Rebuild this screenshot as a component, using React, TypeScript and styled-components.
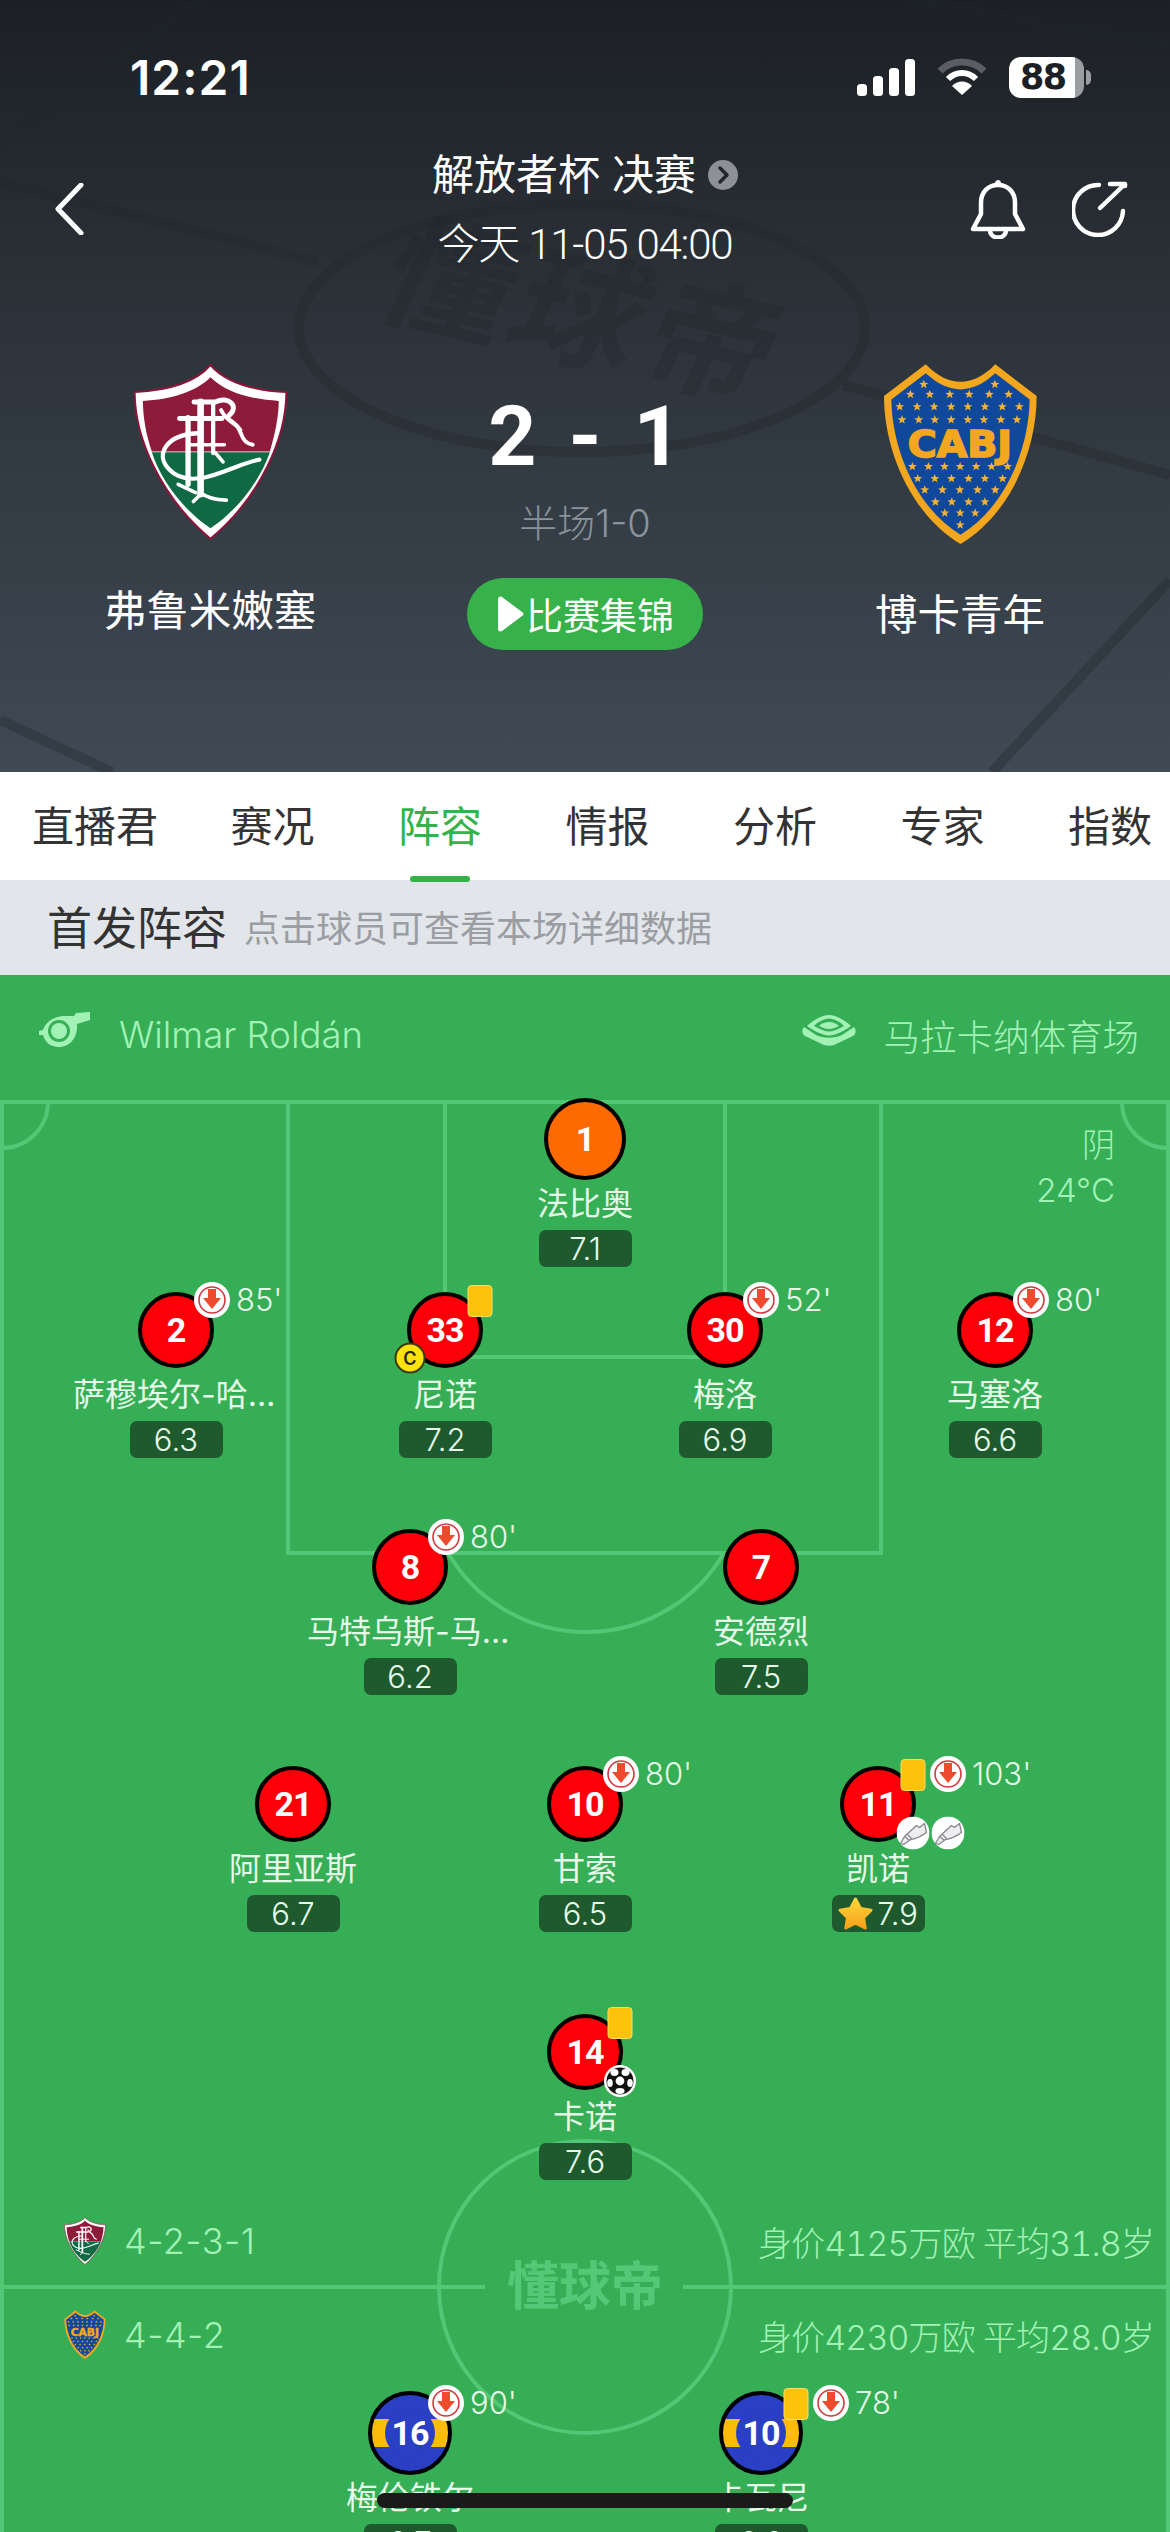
import React from "react";
import styled, { createGlobalStyle, css } from "styled-components";

const FONT = `"Inter","Noto Sans CJK SC",sans-serif`;

const Global = createGlobalStyle`
  html, body { margin: 0; padding: 0; background: #36ae55; }
  * { box-sizing: border-box; }
  body { font-family: ${FONT}; }
`;

const Page = styled.div`
  width: 1170px;
  height: 2532px;
  overflow: hidden;
  display: flex;
  flex-direction: column;
  position: relative;
`;

/* ---------- header ---------- */
const Header = styled.header`
  position: relative;
  height: 772px;
  flex: none;
  overflow: hidden;
  color: #fff;
  background: linear-gradient(180deg, #1c2025 0%, #2a3036 35%, #3f4a55 100%);
`;
const HeaderArt = styled.svg`
  position: absolute;
  inset: 0;
`;
const HeaderMark = styled.span`
  position: absolute;
  left: 345px;
  top: 228px;
  width: 480px;
  text-align: center;
  font-size: 128px;
  line-height: 170px;
  font-weight: 700;
  letter-spacing: 6px;
  color: rgba(24, 28, 33, 0.2);
  transform: rotate(13deg) skewX(-12deg);
`;
const StatusBar = styled.div`
  position: relative;
  height: 138px;
  padding: 16px 79px 0 130px;
  display: flex;
  align-items: center;
  justify-content: space-between;
`;
const Clock = styled.span`
  font-size: 48px;
  font-weight: 600;
  letter-spacing: 1px;
`;
const StatusIcons = styled.div`
  display: flex;
  align-items: center;
  gap: 22px;
`;
const Battery = styled.div`
  position: relative;
  width: 75px;
  height: 41px;
  border-radius: 12px;
  background: linear-gradient(90deg, #fff 88%, #9b9ea1 88%);
  color: #1c2025;
  font-size: 35px;
  font-weight: 700;
  line-height: 41px;
  padding-left: 11px;
  margin-right: 7px;
  font-family: "DejaVu Sans", sans-serif;
  letter-spacing: -1.5px;
  &::after {
    content: "";
    position: absolute;
    right: -7px;
    top: 13px;
    width: 5px;
    height: 15px;
    border-radius: 0 5px 5px 0;
    background: #9b9ea1;
  }
`;
const Nav = styled.div`
  position: relative;
  height: 140px;
  display: grid;
  grid-template-columns: 1fr auto 1fr;
  align-items: center;
`;
const BackBtn = styled.div`
  padding-left: 54px;
  display: flex;
  align-items: center;
`;
const Match = styled.div`
  display: flex;
  flex-direction: column;
  align-items: center;
  font-size: 42px;
  line-height: 70px;
`;
const MatchTitle = styled.div`
  display: flex;
  align-items: center;
  gap: 12px;
  padding-top: 2px;
`;
const MatchDate = styled.span`
  font-family: Roboto, "Noto Sans CJK SC", sans-serif;
  font-weight: 300;
  letter-spacing: -1.2px;
`;
const NavActions = styled.div`
  display: flex;
  justify-content: flex-end;
  align-items: center;
  gap: 46px;
  padding-right: 42px;
`;
const Teams = styled.div`
  position: relative;
  display: grid;
  grid-template-columns: 420px 330px 420px;
  padding-top: 85px;
`;
const Team = styled.div`
  display: flex;
  flex-direction: column;
  align-items: center;
`;
const TeamName = styled.div`
  margin-top: 40px;
  font-size: 42.5px;
  line-height: 60px;
`;
const ScoreCol = styled.div`
  display: flex;
  flex-direction: column;
  align-items: center;
  padding-top: 23px;
`;
const Score = styled.div`
  height: 100px;
  display: flex;
  align-items: center;
  gap: 32px;
  font-family: Roboto, sans-serif;
  font-size: 84px;
  font-weight: 700;
`;
const Half = styled.div`
  margin-top: 12px;
  font-size: 38px;
  line-height: 50px;
  font-weight: 300;
  color: #8b9299;
`;
const HighlightBtn = styled.div`
  margin-top: 30px;
  width: 236px;
  height: 72px;
  border-radius: 36px;
  background: #37b24a;
  display: flex;
  align-items: center;
  justify-content: center;
  gap: 2px;
  font-size: 37px;
  color: #fff;
`;

/* ---------- tabs ---------- */
const TabBar = styled.nav`
  height: 108px;
  flex: none;
  background: #fff;
  display: flex;
  align-items: center;
  padding: 2px 0 0 32px;
  gap: 83.5px;
  position: relative;
  z-index: 1;
`;
const Tab = styled.div<{ $active?: boolean; $first?: boolean }>`
  position: relative;
  font-size: 42px;
  line-height: 60px;
  color: ${(p) => (p.$active ? "#37b24a" : "#333")};
  ${(p) => p.$first && css`margin-right: -11px;`}
  ${(p) =>
    p.$active &&
    css`
      &::after {
        content: "";
        position: absolute;
        left: 50%;
        bottom: -25px;
        width: 60px;
        height: 6px;
        margin-left: -30px;
        border-radius: 3px;
        background: #37b24a;
      }
    `}
`;
const SubHeader = styled.div`
  height: 95px;
  flex: none;
  background: #e2e5e9;
  display: flex;
  align-items: center;
  padding: 0 0 4px 47px;
  gap: 17px;
`;
const SubTitle = styled.div`
  font-size: 45px;
  color: #333;
`;
const SubHint = styled.div`
  font-size: 36px;
  color: #9a9da2;
`;

/* ---------- pitch ---------- */
const Pitch = styled.section`
  position: relative;
  flex: 1;
  background: #36ae55;
  overflow: hidden;
`;
const PitchLines = styled.svg`
  position: absolute;
  inset: 0;
`;
const InfoRow = styled.div`
  position: relative;
  height: 120px;
  display: flex;
  align-items: center;
  justify-content: space-between;
  padding: 0 31px 0 37px;
  color: #a2f2b6;
  font-size: 36.5px;
  font-weight: 300;
`;
const InfoItem = styled.div`
  display: flex;
  align-items: center;
  gap: 28px;
  svg {
    margin-bottom: 11px;
  }
`;
const Weather = styled.div`
  position: absolute;
  right: 55px;
  top: 148px;
  text-align: right;
  color: #a2f2b6;
  font-size: 33px;
  line-height: 45px;
  font-weight: 300;
`;
const FieldMark = styled.div`
  position: absolute;
  left: 485px;
  width: 200px;
  top: 1272px;
  text-align: center;
  font-size: 52px;
  line-height: 80px;
  font-weight: 700;
  color: #55c878;
`;
const Formation = styled.div<{ $top: number }>`
  position: absolute;
  left: 64px;
  right: 20px;
  top: ${(p) => p.$top}px;
  height: 60px;
  display: flex;
  align-items: center;
  color: #a2f2b6;
  font-size: 36px;
  font-weight: 300;
`;
const FormationShape = styled.span`
  margin-left: 18px;
  letter-spacing: 0.5px;
`;
const FormationStats = styled.span`
  position: absolute;
  left: 694px;
  font-size: 34px;
  font-variant-numeric: tabular-nums;
  letter-spacing: -0.9px;
  white-space: pre;
`;

/* ---------- player ---------- */
const PlayerNode = styled.div<{ $x: number; $y: number }>`
  position: absolute;
  left: ${(p) => p.$x - 103}px;
  top: ${(p) => p.$y - 42 - 975}px;
  width: 206px;
  display: flex;
  flex-direction: column;
  align-items: center;
`;
const ShirtSlot = styled.div`
  height: 84px;
  display: flex;
  align-items: center;
  justify-content: center;
`;
const kits = {
  gk: css`
    width: 82px;
    height: 82px;
    background: #ff6a00;
  `,
  home: css`
    width: 76px;
    height: 76px;
    background: #fb0008;
  `,
  away: css`
    width: 84px;
    height: 84px;
    background: linear-gradient(180deg, #2a3fc4 0 32%, #fdbb0b 32% 68%, #2a3fc4 68% 100%);
    &::before {
      content: "";
      position: absolute;
      left: 50%;
      top: 50%;
      width: 50px;
      height: 50px;
      margin: -25px 0 0 -25px;
      border-radius: 50%;
      background: #2a3fc4;
    }
  `,
};
const Shirt = styled.div<{ $kit: keyof typeof kits }>`
  position: relative;
  border-radius: 50%;
  border: 4.5px solid #000;
  ${(p) => kits[p.$kit]}
  color: #fff;
  display: flex;
  align-items: center;
  justify-content: center;
`;
const ShirtNumber = styled.span`
  position: relative;
  font-family: Roboto, sans-serif;
  font-size: 34px;
  font-weight: 700;
  letter-spacing: -1px;
`;
const Badge = styled.span<{ $dx: number; $dy: number }>`
  position: absolute;
  left: 50%;
  top: 50%;
  display: flex;
  transform: translate(calc(-50% + ${(p) => p.$dx}px), calc(-50% + ${(p) => p.$dy}px));
`;
const CardBadge = styled(Badge)`
  width: 25px;
  height: 32px;
  border-radius: 4px;
  background: #fdc20a;
  border: 1px solid #f7dc6a;
`;
const CaptainBadge = styled(Badge)`
  width: 31px;
  height: 31px;
  border-radius: 50%;
  background: #ffe20a;
  border: 2px solid #3b3b10;
  color: #222;
  font-size: 18px;
  font-weight: 600;
  align-items: center;
  justify-content: center;
`;
const Minute = styled.span<{ $left: number }>`
  position: absolute;
  left: calc(50% + ${(p) => p.$left}px);
  top: calc(50% - 50px);
  font-size: 31px;
  line-height: 40px;
  font-weight: 300;
  color: #e4f9e7;
  white-space: nowrap;
`;
const PlayerName = styled.div`
  margin-top: 1px;
  width: 206px;
  text-align: center;
  font-size: 32px;
  line-height: 44px;
  color: #e6fae9;
  white-space: nowrap;
  overflow: hidden;
  text-overflow: ellipsis;
`;
const Rating = styled.div`
  margin-top: 4px;
  width: 93px;
  height: 37px;
  border-radius: 7px;
  background: #1f5a2e;
  color: #e6fae9;
  font-size: 31px;
  font-weight: 300;
  line-height: 37px;
  display: flex;
  align-items: center;
  justify-content: center;
  gap: 4px;
`;
const HomeBar = styled.div`
  position: absolute;
  left: 377px;
  top: 2493px;
  width: 416px;
  height: 15px;
  border-radius: 8px;
  background: #1a1a1a;
`;

/* ---------- drawings ---------- */
const Signal = () => (
  <svg width="58" height="37" viewBox="0 0 58 37">
    <g fill="#fff">
      <rect x="0" y="25" width="10" height="12" rx="3.5" />
      <rect x="16" y="17" width="10" height="20" rx="3.5" />
      <rect x="32" y="9" width="10" height="28" rx="3.5" />
      <rect x="48" y="0" width="10" height="37" rx="3.5" />
    </g>
  </svg>
);
const Wifi = () => (
  <svg width="50" height="38" viewBox="0 0 50 38" fill="none">
    <path d="M3 13 C15 1 35 1 47 13" stroke="#5a5d61" strokeWidth="7" />
    <path d="M11 21 C19 13 31 13 39 21" stroke="#fff" strokeWidth="6" />
    <path d="M25 37 L15 28 C20 22 30 22 35 28 Z" fill="#fff" />
  </svg>
);
const Back = () => (
  <svg width="30" height="52" viewBox="0 0 30 52" fill="none">
    <path d="M27 2 L4 26 L27 50" stroke="#fff" strokeWidth="5" strokeLinecap="round" strokeLinejoin="round" />
  </svg>
);
const RoundChevron = () => (
  <svg width="30" height="30" viewBox="0 0 30 30" fill="none">
    <circle cx="15" cy="15" r="15" fill="#8d9094" />
    <path d="M12 8 L19 15 L12 22" stroke="#22262b" strokeWidth="3.5" strokeLinecap="round" strokeLinejoin="round" />
  </svg>
);
const Bell = () => (
  <svg width="56" height="60" viewBox="0 0 56 60" fill="none" stroke="#fff" strokeWidth="4.5" strokeLinejoin="round">
    <path d="M3 50 L11 35 V24 C11 13 18 6 28 6 C38 6 45 13 45 24 V35 L53 50 Z" />
    <path d="M20 51 C20 61 36 61 36 51" />
    <circle cx="28" cy="4" r="2.5" fill="#fff" strokeWidth="1" />
  </svg>
);
const Share = () => (
  <svg width="56" height="56" viewBox="0 0 56 56" fill="none" stroke="#fff" strokeWidth="4.5" strokeLinecap="round">
    <path d="M27 4 A25 25 0 1 0 51 30" />
    <path d="M28 27 L52 4" />
    <path d="M38 3 H53 V5" strokeLinejoin="round" />
  </svg>
);
const PlayTri = () => (
  <svg width="28" height="36" viewBox="0 0 28 36">
    <path d="M2 3 C2 1 4 0 6 1 L26 16 C28 17 28 19 26 20 L6 35 C4 36 2 35 2 33 Z" fill="#fff" />
  </svg>
);

const Fluminense = ({ width }: { width: number }) => (
  <svg width={width} viewBox="95 72 470 540" style={{ display: "block" }}>
    <path d="M330 78 C285 130 200 155 100 160 C100 300 180 480 330 605 C480 480 560 300 560 160 C460 155 375 130 330 78Z" fill="#fff" stroke="#8a1538" strokeWidth="6" />
    <path d="M330 115 C285 160 210 182 125 187 C125 235 135 290 152 340 L510 340 C525 290 537 235 537 187 C450 182 375 160 330 115Z" fill="#8e1b3a" />
    <path d="M152 343 L510 343 C480 430 410 520 330 573 C250 520 180 430 152 343Z" fill="#0f6a43" />
    <g fill="none" stroke="#fff" strokeLinecap="round" strokeLinejoin="round">
      <path d="M280 190 H345 C385 170 420 205 385 232" strokeWidth="15" />
      <path d="M300 190 V470" strokeWidth="20" />
      <path d="M262 238 V440" strokeWidth="16" />
      <path d="M236 240 H365" strokeWidth="15" />
      <path d="M338 195 V345" strokeWidth="13" />
      <path d="M362 215 C385 260 408 245 422 285 C430 310 445 318 458 320" strokeWidth="12" />
      <path d="M385 240 C400 250 415 262 422 275" strokeWidth="9" />
      <path d="M290 285 C195 290 160 350 205 395 C240 432 300 428 360 405 C410 388 440 372 478 365" strokeWidth="13" />
      <path d="M262 320 H372 M345 345 L368 372" strokeWidth="11" />
      <path d="M232 440 L285 465 M300 470 L278 492 M300 465 C320 482 345 487 378 488" strokeWidth="11" />
    </g>
  </svg>
);

const starRows: [number, number[]][] = [
  [130, [222, 435]],
  [160, [182, 240, 300, 358, 418, 476]],
  [197, [150, 202, 253, 304, 354, 405, 457, 508]],
  [236, [157, 207, 255, 304, 354, 402, 453, 501]],
  [376, [188, 236, 284, 331, 379, 425, 473]],
  [412, [204, 255, 305, 356, 405, 458]],
  [446, [225, 278, 330, 383, 436]],
  [482, [257, 306, 356, 405]],
  [515, [285, 331, 376]],
  [551, [331]],
];
const starPoints = (cx: number, cy: number, r: number) =>
  Array.from({ length: 10 }, (_, i) => {
    const a = -Math.PI / 2 + (i * Math.PI) / 5;
    const rr = i % 2 ? r * 0.42 : r;
    return `${(cx + rr * Math.cos(a)).toFixed(1)},${(cy + rr * Math.sin(a)).toFixed(1)}`;
  }).join(" ");

const Boca = ({ width }: { width: number }) => (
  <svg width={width} viewBox="100 66 464 546" style={{ display: "block" }}>
    <path d="M228 70 C265 108 298 122 332 122 C366 122 400 108 436 70 L560 165 C560 330 480 520 332 608 C185 520 103 330 103 165Z" fill="#f3a71f" />
    <path d="M228 97 C265 130 298 145 332 145 C366 145 400 130 436 97 L539 175 C537 325 465 500 332 580 C200 500 127 325 125 175Z" fill="#10499c" />
    {starRows.flatMap(([y, xs]) =>
      xs.map((x) => <polygon key={`${x}-${y}`} points={starPoints(x, y, 14)} fill="#f3b233" />)
    )}
    <text
      x="330"
      y="348"
      textAnchor="middle"
      textLength="312"
      lengthAdjust="spacingAndGlyphs"
      fontFamily='"DejaVu Sans", sans-serif'
      fontWeight="700"
      fontSize="112"
      fill="#f3a71f"
      stroke="#f3a71f"
      strokeWidth="5"
    >
      CABJ
    </text>
  </svg>
);

const Whistle = () => (
  <svg width="54" height="36" viewBox="0 0 54 36" fill="#a2f2b6">
    <path d="M2 19 L6 18 C9 9 17 5 26 4 L37 4 L39 1 L53 0 L53 8 L40 12 C41 24 34 35 22 35 C13 35 8 30 6 23 L2 23Z" />
    <circle cx="22" cy="19" r="11" fill="#36ae55" />
    <circle cx="22" cy="19" r="8" />
  </svg>
);
const Stadium = () => (
  <svg width="54" height="32" viewBox="0 0 54 32" fill="#a2f2b6">
    <path d="M2 13 L14 21 C22 24.5 32 24.5 40 21 L52 13 C54.5 16 54 20 51 22 L32 31 C29 32 25 32 22 31 L3 22 C0 20 -.5 16 2 13Z" />
    <path d="M27 1 C34 1 44 7 49 12 C40 18 33 21.5 27 21.5 C21 21.5 14 18 5 12 C10 7 20 1 27 1Z" />
    <path d="M27 4.5 C32 4.5 39 8.5 42 12 C36 15.5 31 17.5 27 17.5 C23 17.5 18 15.5 12 12 C15 8.5 22 4.5 27 4.5Z" fill="#36ae55" />
    <path d="M27 8 C31 8 35 10 37 12 C33 14 30 15 27 15 C24 15 21 14 17 12 C19 10 23 8 27 8Z" />
  </svg>
);
const SubIcon = () => (
  <svg width="36" height="36" viewBox="0 0 36 36">
    <circle cx="18" cy="18" r="18" fill="#fff" />
    <circle cx="18" cy="18" r="13" fill="none" stroke="#cf3a3f" strokeWidth="1.6" />
    <path d="M14 7 H22 V16 H27 L18 27 L9 16 H14Z" fill="#ee4a2e" />
  </svg>
);
const BootIcon = () => (
  <svg width="33" height="33" viewBox="0 0 33 33">
    <circle cx="16.5" cy="16.5" r="16.5" fill="#fff" />
    <path d="M4 27 L8 20 L20 9 L23 11 L28 7 L30 16 C26 19 20 22 14 23 L7 28Z" fill="#eeeef1" stroke="#85858b" strokeWidth="1.3" strokeLinejoin="round" />
    <path d="M8 20 L13 24 M11 18 L15 22" stroke="#85858b" strokeWidth="1.2" />
  </svg>
);
const BallIcon = () => (
  <svg width="32" height="32" viewBox="0 0 32 32">
    <circle cx="16" cy="16" r="16" fill="#fff" />
    <circle cx="16" cy="16" r="13.5" fill="#111" />
    <g fill="#fff">
      <circle cx="16" cy="16" r="4.4" />
      <ellipse cx="10.5" cy="7.5" rx="4" ry="3.4" />
      <ellipse cx="21.5" cy="7.5" rx="4" ry="3.4" />
      <ellipse cx="6" cy="18" rx="2.8" ry="4" />
      <ellipse cx="26" cy="18" rx="2.8" ry="4" />
      <ellipse cx="16" cy="26" rx="4.6" ry="3" />
    </g>
  </svg>
);
const StarIcon = () => (
  <svg width="35" height="33" viewBox="0 0 35 33">
    <defs>
      <linearGradient id="gold" x1="0" y1="0" x2="0" y2="1">
        <stop offset="0" stopColor="#ffd53a" />
        <stop offset="1" stopColor="#f7a21b" />
      </linearGradient>
    </defs>
    <path
      d="M17.5 2 L22.5 11.5 L33 13.2 L25.5 20.8 L27.2 31 L17.5 26.2 L7.8 31 L9.5 20.8 L2 13.2 L12.5 11.5Z"
      fill="url(#gold)"
      stroke="url(#gold)"
      strokeWidth="3"
      strokeLinejoin="round"
    />
  </svg>
);

/* ---------- data ---------- */
type P = {
  x: number;
  y: number;
  no: number;
  name: string;
  rating: string;
  kit: keyof typeof kits;
  sub?: string;
  card?: boolean;
  captain?: boolean;
  boots?: number;
  goal?: boolean;
  star?: boolean;
};
const players: P[] = [
  { x: 585, y: 1139, no: 1, name: "法比奥", rating: "7.1", kit: "gk" },
  { x: 176, y: 1330, no: 2, name: "萨穆埃尔-哈维尔", rating: "6.3", kit: "home", sub: "85'" },
  { x: 445, y: 1330, no: 33, name: "尼诺", rating: "7.2", kit: "home", card: true, captain: true },
  { x: 725, y: 1330, no: 30, name: "梅洛", rating: "6.9", kit: "home", sub: "52'" },
  { x: 995, y: 1330, no: 12, name: "马塞洛", rating: "6.6", kit: "home", sub: "80'" },
  { x: 410, y: 1567, no: 8, name: "马特乌斯-马丁内利", rating: "6.2", kit: "home", sub: "80'" },
  { x: 761, y: 1567, no: 7, name: "安德烈", rating: "7.5", kit: "home" },
  { x: 293, y: 1804, no: 21, name: "阿里亚斯", rating: "6.7", kit: "home" },
  { x: 585, y: 1804, no: 10, name: "甘索", rating: "6.5", kit: "home", sub: "80'" },
  { x: 878, y: 1804, no: 11, name: "凯诺", rating: "7.9", kit: "home", sub: "103'", card: true, boots: 2, star: true },
  { x: 585, y: 2052, no: 14, name: "卡诺", rating: "7.6", kit: "home", card: true, goal: true },
  { x: 410, y: 2433, no: 16, name: "梅伦铁尔", rating: "6.7", kit: "away", sub: "90'" },
  { x: 761, y: 2433, no: 10, name: "卡瓦尼", rating: "6.6", kit: "away", sub: "78'", card: true },
];

const Player = ({ p }: { p: P }) => {
  const subDx = p.card ? 70 : 36;
  return (
    <PlayerNode $x={p.x} $y={p.y}>
      <ShirtSlot>
        <Shirt $kit={p.kit}>
          <ShirtNumber>{p.no}</ShirtNumber>
          {p.card && <CardBadge $dx={35} $dy={-29} />}
          {p.sub && (
            <>
              <Badge $dx={subDx} $dy={-30}>
                <SubIcon />
              </Badge>
              <Minute $left={subDx + 24}>{p.sub}</Minute>
            </>
          )}
          {p.captain && <CaptainBadge $dx={-35} $dy={28}>C</CaptainBadge>}
          {p.goal && (
            <Badge $dx={35} $dy={29}>
              <BallIcon />
            </Badge>
          )}
          {Array.from({ length: p.boots ?? 0 }, (_, i) => (
            <Badge key={i} $dx={35 + i * 35} $dy={29}>
              <BootIcon />
            </Badge>
          ))}
        </Shirt>
      </ShirtSlot>
      <PlayerName>{p.name}</PlayerName>
      <Rating>
        {p.star && <StarIcon />}
        {p.rating}
      </Rating>
    </PlayerNode>
  );
};

export default function App() {
  return (
    <Page>
      <Global />
      <Header>
        <HeaderArt width="1170" height="772" viewBox="0 0 1170 772" fill="none" stroke="#20252a" strokeOpacity="0.34" strokeWidth="10">
          <ellipse cx="582" cy="328" rx="283" ry="124" />
          <path d="M0 182 L318 262" />
          <path d="M843 385 L1170 475" />
          <path d="M200 0 L0 145" />
          <path d="M910 0 L1170 45" />
          <path d="M0 720 L112 772" />
          <path d="M1170 580 L992 772" />
        </HeaderArt>
        <HeaderMark>懂球帝</HeaderMark>
        <StatusBar>
          <Clock>12:21</Clock>
          <StatusIcons>
            <Signal />
            <Wifi />
            <Battery>88</Battery>
          </StatusIcons>
        </StatusBar>
        <Nav>
          <BackBtn>
            <Back />
          </BackBtn>
          <Match>
            <MatchTitle>
              <span>解放者杯 决赛</span>
              <RoundChevron />
            </MatchTitle>
            <MatchDate>今天 11-05 04:00</MatchDate>
          </Match>
          <NavActions>
            <Bell />
            <Share />
          </NavActions>
        </Nav>
        <Teams>
          <Team>
            <Fluminense width={155} />
            <TeamName>弗鲁米嫩塞</TeamName>
          </Team>
          <ScoreCol>
            <Score>
              <span>2</span>
              <span>-</span>
              <span>1</span>
            </Score>
            <Half>半场1-0</Half>
            <HighlightBtn>
              <PlayTri />
              比赛集锦
            </HighlightBtn>
          </ScoreCol>
          <Team>
            <Boca width={155} />
            <TeamName>博卡青年</TeamName>
          </Team>
        </Teams>
      </Header>

      <TabBar>
        <Tab $first>直播君</Tab>
        <Tab>赛况</Tab>
        <Tab $active>阵容</Tab>
        <Tab>情报</Tab>
        <Tab>分析</Tab>
        <Tab>专家</Tab>
        <Tab>指数</Tab>
      </TabBar>
      <SubHeader>
        <SubTitle>首发阵容</SubTitle>
        <SubHint>点击球员可查看本场详细数据</SubHint>
      </SubHeader>

      <Pitch>
        <PitchLines width="1170" height="1557" viewBox="0 0 1170 1557" fill="none" stroke="#52c775" strokeWidth="4">
          <path d="M0 127 H1170 M2 127 V1557 M1168 127 V1557" />
          <path d="M48 127 A46 46 0 0 1 0 173 M1122 127 A46 46 0 0 0 1170 173" />
          <path d="M288 127 V578 H881 V127" />
          <path d="M445 127 V382 H725 V127" />
          <path d="M448 578 A160 160 0 0 0 724 578" />
          <circle cx="585" cy="1312" r="146" />
          <path d="M0 1312 H485 M683 1312 H1170" />
        </PitchLines>
        <InfoRow>
          <InfoItem>
            <Whistle />
            <span>Wilmar Roldán</span>
          </InfoItem>
          <InfoItem>
            <Stadium />
            <span>马拉卡纳体育场</span>
          </InfoItem>
        </InfoRow>
        <Weather>
          阴
          <br />
          24°C
        </Weather>
        <FieldMark>懂球帝</FieldMark>
        <Formation $top={1236}>
          <Fluminense width={42} />
          <FormationShape>4-2-3-1</FormationShape>
          <FormationStats>身价4125万欧 平均31.8岁</FormationStats>
        </Formation>
        <Formation $top={1330}>
          <Boca width={42} />
          <FormationShape>4-4-2</FormationShape>
          <FormationStats>身价4230万欧 平均28.0岁</FormationStats>
        </Formation>
        {players.map((p) => (
          <Player key={`${p.kit}-${p.no}`} p={p} />
        ))}
      </Pitch>
      <HomeBar />
    </Page>
  );
}
